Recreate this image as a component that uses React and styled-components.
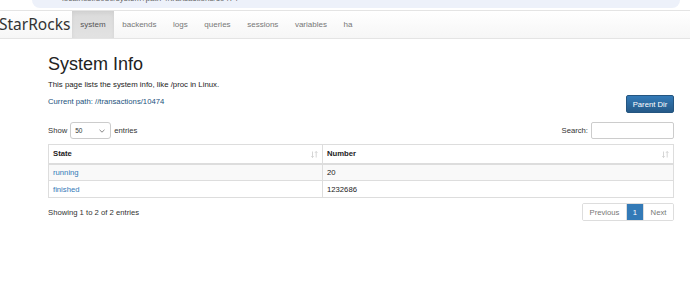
import React from "react";
import styled, { createGlobalStyle } from "styled-components";

const Global = createGlobalStyle`
  html, body { margin: 0; padding: 0; background: #fff; }
  body { font-family: "Liberation Sans", Arial, sans-serif; color: #333; font-size: 7.7px; }
  * { box-sizing: border-box; }
`;

const Chrome = styled.div`
  height: 10px;
  overflow: hidden;
  display: flex;
  background: #fff;
`;

const AddressPill = styled.div`
  margin-left: 32px;
  width: 648px;
  height: 16px;
  margin-top: -8px;
  border-radius: 8px;
  background: #edf1fa;
  color: #666;
  font-size: 8px;
  line-height: 14px;
  padding-left: 30px;
  white-space: nowrap;
`;

const Navbar = styled.div`
  display: flex;
  align-items: stretch;
  height: 29px;
  border-top: 1px solid #e4e4e4;
  border-bottom: 1px solid #e4e4e4;
  background: linear-gradient(to bottom, #ffffff 0%, #f6f6f6 100%);
`;

const Brand = styled.div`
  font-family: "Noto Sans", sans-serif;
  font-size: 15.5px;
  font-weight: 400;
  color: #333;
  margin-left: -1px;
  width: 73px;
  line-height: 27px;
`;

const NavItem = styled.div`
  padding: 0 8.3px;
  font-size: 8px;
  line-height: 27px;
  color: ${p => (p.active ? "#555" : "#777")};
  background: ${p => (p.active ? "linear-gradient(to bottom, #dbdbdb 0%, #e2e2e2 100%)" : "transparent")};
  box-shadow: ${p => (p.active ? "inset 0 2px 4px rgba(0,0,0,0.06)" : "none")};
`;

const Main = styled.div`
  margin-left: 48px;
  width: 626px;
  padding-top: 15px;
`;

const Title = styled.h1`
  margin: 0;
  font-size: 18px;
  font-weight: 500;
  line-height: 20px;
  color: #222;
`;

const Lead = styled.p`
  margin: 5px 0 0;
  font-size: 7.8px;
  line-height: 11px;
  color: #222;
`;

const Row = styled.div`
  display: flex;
  justify-content: space-between;
  align-items: ${p => p.align || "center"};
  margin-top: ${p => p.top || 0}px;
`;

const Link = styled.a`
  color: #23527c;
  font-size: 7.7px;
  line-height: 11px;
  margin-top: 1px;
  text-decoration: none;
`;

const Button = styled.button`
  height: 18px;
  width: 48px;
  padding: 0;
  border: 1px solid #245580;
  border-radius: 2px;
  background: linear-gradient(to bottom, #337ab7 0%, #265a88 100%);
  color: #fff;
  font-family: "Liberation Sans", Arial, sans-serif;
  font-size: 7.7px;
`;

const Label = styled.span`
  display: flex;
  align-items: center;
  gap: 3px;
  font-size: 7.7px;
  color: #333;
`;

const Select = styled.div`
  width: 41px;
  height: 17px;
  border: 1px solid #ccc;
  border-radius: 3px;
  display: flex;
  align-items: center;
  justify-content: space-between;
  padding: 0 5px 0 4px;
  font-size: 6.5px;
  color: #333;
`;

const Input = styled.div`
  width: 83px;
  height: 17px;
  border: 1px solid #ccc;
  border-radius: 2px;
  background: #fff;
`;

const Table = styled.table`
  width: 100%;
  margin-top: 5px;
  border-collapse: collapse;
  border: 1px solid #ddd;
  font-size: 7.7px;
`;

const Th = styled.th`
  height: 19px;
  padding: 0 4px;
  text-align: left;
  font-weight: bold;
  color: #222;
  border: 1px solid #ddd;
  border-bottom: 2px solid #ddd;
  width: ${p => p.w || "auto"};
  position: relative;
`;

const Tr = styled.tr`
  background: ${p => (p.odd ? "#f9f9f9" : "#fff")};
`;

const Td = styled.td`
  height: 17px;
  padding: 0 4px;
  border: 1px solid #ddd;
  color: ${p => (p.link ? "#337ab7" : "#222")};
`;

const SortIcon = styled.svg`
  position: absolute;
  right: 4px;
  top: 6px;
`;

const Pager = styled.div`
  display: flex;
  height: 18px;
  border: 1px solid #ddd;
  border-radius: 2px;
  overflow: hidden;
`;

const Page = styled.div`
  display: flex;
  align-items: center;
  justify-content: center;
  width: ${p => p.w}px;
  font-size: 7.7px;
  color: ${p => (p.active ? "#fff" : "#777")};
  background: ${p => (p.active ? "#337ab7" : "#fff")};
  border-left: ${p => (p.first ? "none" : "1px solid #ddd")};
`;

const Sort = () => (
  <SortIcon width="7" height="7" viewBox="0 0 7 7">
    <path d="M1.5 0.5V6.5M0.3 5.2L1.5 6.5L2.7 5.2" stroke="#ccc" strokeWidth="0.8" fill="none" />
    <path d="M5.2 6.5V0.5M4 1.8L5.2 0.5L6.4 1.8" stroke="#ccc" strokeWidth="0.8" fill="none" />
  </SortIcon>
);

const navs = ["system", "backends", "logs", "queries", "sessions", "variables", "ha"];

export default function App() {
  return (
    <>
      <Global />
      <Chrome>
        <AddressPill>localhost:8030/system?path=//transactions/10474</AddressPill>
      </Chrome>
      <Navbar>
        <Brand>StarRocks</Brand>
        {navs.map(n => (
          <NavItem key={n} active={n === "system"}>{n}</NavItem>
        ))}
      </Navbar>
      <Main>
        <Title>System Info</Title>
        <Lead>This page lists the system info, like /proc in Linux.</Lead>
        <Row align="flex-start" top={5}>
          <Link href="#">Current path: //transactions/10474</Link>
          <Button>Parent Dir</Button>
        </Row>
        <Row top={9}>
          <Label>
            Show
            <Select>
              50
              <svg width="6" height="4" viewBox="0 0 6 4">
                <path d="M0.5 0.8L3 3.2L5.5 0.8" stroke="#555" strokeWidth="0.7" fill="none" />
              </svg>
            </Select>
            entries
          </Label>
          <Label>
            Search:
            <Input />
          </Label>
        </Row>
        <Table>
          <thead>
            <tr>
              <Th w="274px">State<Sort /></Th>
              <Th>Number<Sort /></Th>
            </tr>
          </thead>
          <tbody>
            <Tr odd>
              <Td link>running</Td>
              <Td>20</Td>
            </Tr>
            <Tr>
              <Td link>finished</Td>
              <Td>1232686</Td>
            </Tr>
          </tbody>
        </Table>
        <Row top={5}>
          <Label>Showing 1 to 2 of 2 entries</Label>
          <Pager>
            <Page w={43} first>Previous</Page>
            <Page w={17} active>1</Page>
            <Page w={30}>Next</Page>
          </Pager>
        </Row>
      </Main>
    </>
  );
}
